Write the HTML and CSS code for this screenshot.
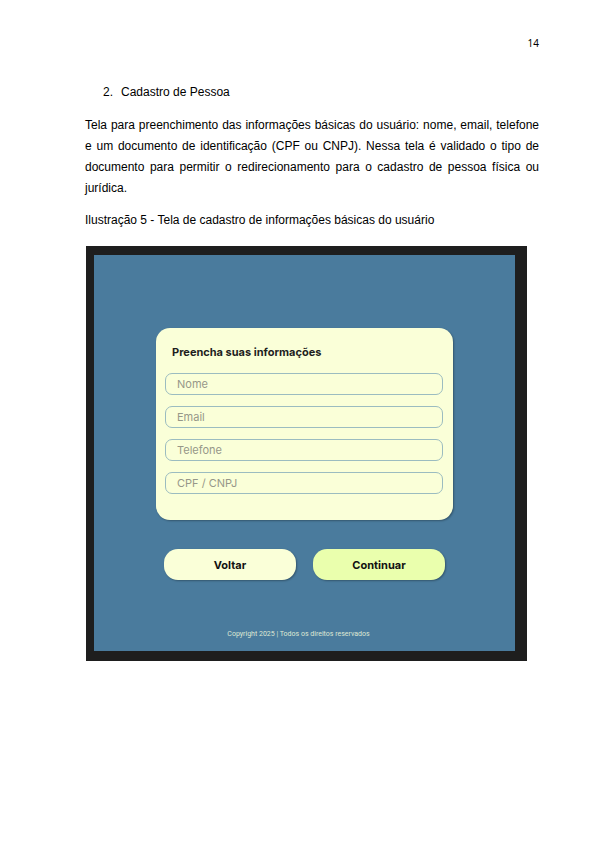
FILE: index.html
```html
<!DOCTYPE html>
<html lang="pt-BR">
<head>
<meta charset="utf-8">
<meta name="viewport" content="width=device-width, initial-scale=1">
<title>Cadastro de Pessoa</title>
<link rel="stylesheet" href="styles.css">
</head>
<body>
<header class="page-number">14</header>
<main>
  <h1 class="section-title"><span>2.</span><span>Cadastro de Pessoa</span></h1>
  <p class="text">Tela para preenchimento das informações básicas do usuário: nome, email, telefone e um documento de identificação (CPF ou CNPJ). Nessa tela é validado o tipo de documento para permitir o redirecionamento para o cadastro de pessoa física ou jurídica.</p>
  <figure class="figure">
    <figcaption class="caption">Ilustração 5 - Tela de cadastro de informações básicas do usuário</figcaption>
    <div class="frame">
      <form class="screen">
        <section class="card">
          <h2 class="card-title">Preencha suas informações</h2>
          <div class="fields">
            <input class="field" type="text" placeholder="Nome" aria-label="Nome">
            <input class="field" type="email" placeholder="Email" aria-label="Email">
            <input class="field" type="tel" placeholder="Telefone" aria-label="Telefone">
            <input class="field" type="text" placeholder="CPF / CNPJ" aria-label="CPF / CNPJ">
          </div>
        </section>
        <div class="actions">
          <button class="button" type="button">Voltar</button>
          <button class="button button-primary" type="button">Continuar</button>
        </div>
        <footer class="copyright">Copyright 2025 | Todos os direitos reservados</footer>
      </form>
    </div>
  </figure>
</main>
</body>
</html>
```
FILE: styles.css
```css
* {
  box-sizing: border-box;
}

body {
  margin: 0;
  padding: 36px 57px 48px 85px;
  background: #fff;
  color: #000;
  font: 12px/21px "Liberation Sans", Arial, sans-serif;
}

.page-number {
  font: 10px/14px "Noto Sans", sans-serif;
  text-align: right;
}

.section-title {
  display: flex;
  gap: 8px;
  margin: 32px 0 12px;
  padding-left: 18px;
  font-size: 12px;
  font-weight: 400;
}

.text {
  margin: 0 0 11px;
  text-align: justify;
}

.figure {
  margin: 0;
}

.caption {
  margin-bottom: 15px;
}

.frame {
  margin: 0 12px 0 1px;
  padding: 9px 12px 10px 8px;
  background: #1e1e1e;
}

.screen {
  padding: 73px 62px 11px;
  background: #4a7b9d;
  font-family: Inter, sans-serif;
}

.card {
  padding: 16px 10px 26px 9px;
  border-radius: 14px;
  background: #faffd8;
  box-shadow: 1px 1px 2px rgba(0, 0, 0, 0.3);
}

.card-title {
  margin: 0 0 12px;
  padding-left: 7px;
  color: #1e1e1e;
  font-size: 11px;
  font-weight: 700;
  line-height: 17px;
}

.fields {
  display: grid;
  gap: 11px;
}

.field {
  width: 100%;
  height: 22px;
  padding: 0 11px;
  border: 1px solid #9bbcc0;
  border-radius: 7px;
  background: transparent;
  color: #1e1e1e;
  font: 11px/20px Inter, sans-serif;
}

.field::placeholder {
  color: #969789;
  opacity: 1;
}

.actions {
  display: grid;
  grid-template-columns: 1fr 1fr;
  gap: 17px;
  margin: 29px 0 48px;
  padding: 0 8px;
}

.button {
  height: 31px;
  padding: 0;
  border: 0;
  border-radius: 14px;
  background: #faffd8;
  box-shadow: 1px 1px 2px rgba(0, 0, 0, 0.3);
  color: #111;
  font: 700 11px/16px Inter, sans-serif;
}

.button-primary {
  background: #eaffad;
}

.copyright {
  padding-right: 12px;
  color: #dfe8d4;
  font: 7px/12px Roboto, sans-serif;
  text-align: center;
}
```
